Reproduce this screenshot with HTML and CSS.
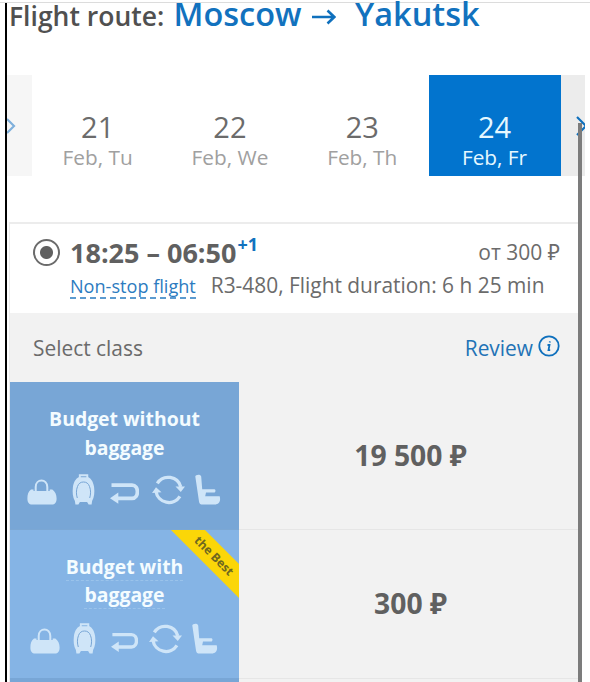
FILE: index.html
```html
<!DOCTYPE html>
<html lang="en">
<head>
    <meta charset="UTF-8">
    <meta name="viewport" content="width=device-width, initial-scale=1.0">
    <title>Flight route: Moscow - Yakutsk</title>
    <link rel="stylesheet" href="styles.css">
</head>
<body>
    <svg class="sprite" width="0" height="0">
        <symbol id="bag" viewBox="0 0 30 26">
            <path d="M8.700 12V8c0-8.600 11.600-8.600 11.600 0v4" fill="none" stroke="currentColor" stroke-width="2"/>
            <path d="M4 10.500h2.500V12h16.200v-1.500h2.600c2.800 1.700 4.300 5.500 4.300 9 0 4-1.800 6-4.600 6H5c-2.800 0-4.600-2-4.600-6 0-3.500.8-7.300 3.600-9z"/>
        </symbol>
        <symbol id="suitcase" viewBox="0 0 23 31">
            <path d="M7.800 5V1.300h7.500V5" fill="none" stroke="currentColor" stroke-width="1.900"/>
            <path d="M6.500 3.300h10c3 1.500 5 5.500 5.600 9.900.6 4.900.2 9.800-2 13.800l-.5 3.500h-3l-1.500-2.500H7.900l-1.500 2.500h-3L2.900 27C.7 23 .3 18.100.9 13.200c.6-4.400 2.600-8.400 5.600-9.900z"/>
            <path class="cut" d="M5.300 24c-1.200-3.700-1.200-8 .2-11.500C6.600 9.300 8.700 8 11.500 8s4.900 1.300 6 4.500c1.400 3.500 1.400 7.800.2 11.500"/>
        </symbol>
        <symbol id="refund" viewBox="0 0 29 22">
            <path d="M1.500 3.100H22c7.200 0 7.200 13.300 0 13.300H7" fill="none" stroke="currentColor" stroke-width="3.700"/>
            <path d="M8.300 10.400v11.400L0 16.200z"/>
        </symbol>
        <symbol id="exchange" viewBox="0 0 33 31">
            <path d="M5.300 9.300A13 13 0 0 1 28.800 13M27.900 22.300A13 13 0 0 1 4 17.500" fill="none" stroke="currentColor" stroke-width="3.300"/>
            <path d="M23.500 12.500H33L28.800 18zM0 19l4-5.700 5.500 5z"/>
        </symbol>
        <symbol id="seat" viewBox="0 0 26 31">
            <path d="M.3 2.500C.5.500 5.700-.2 6.200 2.500l1 12.700h12.300c1.300.2 1.300 3 0 3.300H11l-.8 3.700h14.500c1.300 5-.7 8.300-5 8.300H8c-2.700 0-3.600-.5-4-3z"/>
        </symbol>
    </svg>

    <div class="page">
        <h1 class="route">
            <span class="route-label">Flight route:</span>
            <span class="city from">Moscow</span>
            <svg class="route-arrow" width="24" height="16" viewBox="0 0 24 16"><path d="M0 8h22M15.500 1.500L22.300 8l-6.800 6.500"/></svg>
            <span class="city to">Yakutsk</span>
        </h1>

        <div class="dates">
            <div class="nav prev"><svg width="9" height="18" viewBox="0 0 9 18"><path d="M0 2l7 7-7 7"/></svg></div>
            <div class="date"><b>21</b><span>Feb, Tu</span></div>
            <div class="date"><b>22</b><span>Feb, We</span></div>
            <div class="date"><b>23</b><span>Feb, Th</span></div>
            <div class="date active"><b>24</b><span>Feb, Fr</span></div>
            <div class="nav next"><svg width="9" height="20" viewBox="0 0 9 20"><path d="M1 1l9 9-9 9"/></svg></div>
        </div>

        <div class="card">
            <div class="flight">
                <span class="radio"></span>
                <div class="info">
                    <div class="times">
                        <span class="time">18:25 – 06:50</span><sup>+1</sup>
                        <span class="from-price">от 300 ₽</span>
                    </div>
                    <div class="details">
                        <a class="nonstop">Non-stop flight</a>
                        <span class="duration">R3-480, Flight duration: 6 h 25 min</span>
                    </div>
                </div>
            </div>

            <div class="class-head">
                <span class="select">Select class</span>
                <a class="review">Review</a>
                <svg width="22" height="22" viewBox="0 0 22 22"><circle cx="11" cy="11" r="9.700"/><path d="M11.900 6.300l-.2 1.200M9.500 10h2l-1 5.200h1.700"/></svg>
            </div>

            <div class="fare">
                <div class="fare-name">
                    <div class="title"><span>Budget without</span><br><span>baggage</span></div>
                    <div class="icons">
                        <svg class="i-bag"><use href="#bag"/></svg>
                        <svg class="i-suitcase"><use href="#suitcase"/></svg>
                        <svg class="i-refund"><use href="#refund"/></svg>
                        <svg class="i-exchange"><use href="#exchange"/></svg>
                        <svg class="i-seat"><use href="#seat"/></svg>
                    </div>
                </div>
                <div class="price">19 500 ₽</div>
            </div>

            <div class="fare best">
                <div class="fare-name">
                    <div class="ribbon"><span>the Best</span></div>
                    <div class="title"><span>Budget with</span><br><span>baggage</span></div>
                    <div class="icons">
                        <svg class="i-bag"><use href="#bag"/></svg>
                        <svg class="i-suitcase"><use href="#suitcase"/></svg>
                        <svg class="i-refund"><use href="#refund"/></svg>
                        <svg class="i-exchange"><use href="#exchange"/></svg>
                        <svg class="i-seat"><use href="#seat"/></svg>
                    </div>
                </div>
                <div class="price">300 ₽</div>
            </div>

            <div class="fare last">
                <div class="fare-name"></div>
                <div class="price"></div>
            </div>
        </div>

        <div class="scrollbar"></div>
    </div>
</body>
</html>
```
FILE: styles.css
```css
* {
    box-sizing: border-box;
}
body {
    margin: 0;
    background: #fff;
    font-family: "Open Sans", "Noto Sans", sans-serif;
    color: #6b6b6b;
}
svg {
    flex: none;
    fill: none;
    stroke: #0f70bd;
}
.sprite {
    position: absolute;
}
.page {
    position: relative;
    height: 682px;
    padding-top: 2px;
    padding-left: 7px;
    background: linear-gradient(#000, #000) 5px 3px / 2px 100% no-repeat;
}
.page::before {
    content: "";
    display: block;
    height: 1px;
    margin-left: -7px;
    background: #dcdcdc;
}

/* heading */
.route {
    display: flex;
    align-items: baseline;
    height: 72px;
    margin: 0;
    padding-left: 2px;
    line-height: 22px;
    font-weight: 600;
}
.route-label {
    width: 164.5px;
    font-size: 26.5px;
    color: #505050;
}
.city {
    font-size: 32.5px;
    color: #1272be;
}
.city.from {
    width: 138.5px;
}
.route-arrow {
    width: 24px;
    margin-right: 19px;
    stroke-width: 2.6;
    align-self: flex-start;
    margin-top: 6px;
}

/* dates */
.dates {
    display: flex;
    height: 101px;
}
.nav {
    display: flex;
    align-items: center;
    background: #f6f6f6;
}
.nav svg {
    stroke-width: 2.2;
}
.prev {
    width: 25px;
}
.prev svg {
    stroke: #7fb0dc;
}
.next {
    width: 24px;
    background: #ececec;
    justify-content: flex-end;
}
.date {
    width: 132.3px;
    padding-top: 35px;
    padding-right: 1px;
    text-align: center;
}
.date b {
    display: block;
    font-size: 29px;
    font-weight: 400;
    line-height: 34px;
}
.date span {
    display: block;
    font-size: 20.8px;
    line-height: 26px;
    color: #a0a0a0;
}
.date.active,
.date.active span {
    background: #0274ce;
    color: #e6f8ff;
}

/* flight */
.card {
    width: 569px;
    height: 460px;
    margin: 46px 0 0 2px;
    border: 2px solid #ececec;
    border-width: 2px 0 0 1px;
    background: #f2f2f2;
}
.flight {
    display: flex;
    height: 89px;
    padding: 10px 18px 0 23px;
    background: #fff;
}
.radio {
    width: 27px;
    height: 27px;
    margin: 5px 10px 0 0;
    border: 2px solid #6b6b6b;
    border-radius: 50%;
    background: radial-gradient(circle, #606060 6px, #fff 7px);
}
.info {
    flex: 1;
}
.times {
    display: flex;
    height: 36px;
    line-height: 37px;
}
.time {
    font-size: 27px;
    font-weight: 700;
    color: #606060;
}
sup {
    margin-left: 1px;
    font-size: 18px;
    font-weight: 700;
    line-height: 20px;
    color: #1272be;
}
.from-price {
    margin-left: auto;
    font-size: 21px;
}
.details {
    display: flex;
    align-items: baseline;
    margin-top: 2px;
    line-height: 26px;
    white-space: nowrap;
}
.nonstop {
    margin-right: 15px;
    border-bottom: 2px dashed #5c9bd0;
    font-size: 18.1px;
    line-height: 22px;
    color: #2c7bbf;
}
.duration {
    font-size: 20.9px;
}

/* class selection */
.class-head {
    display: flex;
    height: 69px;
    padding: 22px 18px 0 23px;
    font-size: 20.9px;
    line-height: 27px;
}
.review {
    margin-left: auto;
    margin-right: 5px;
    color: #2273b6;
}
.class-head svg {
    stroke-width: 1.8;
}
.fare {
    display: flex;
    height: 147px;
}
.best {
    height: 149px;
}
.last {
    height: 4px;
}
.fare-name {
    position: relative;
    width: 229px;
    padding-top: 22px;
    background: #78a6d6;
    color: #cfe5f8;
    overflow: hidden;
}
.best .fare-name {
    padding-top: 23px;
    border-top: 1px solid #7ba7d4;
    background: #85b4e5;
}
.title {
    height: 58px;
    font-size: 19.4px;
    font-weight: 700;
    line-height: 29px;
    text-align: center;
    color: #f4fcff;
}
.best .title {
    line-height: 28px;
}
.best .title span {
    border-bottom: 1px dashed #9ac3eb;
}
.icons {
    display: flex;
    align-items: flex-end;
    height: 43px;
    padding-left: 17px;
}
.icons svg {
    fill: currentColor;
    stroke: none;
}
.i-bag {
    width: 30px;
    height: 26px;
    margin-right: 15px;
}
.i-suitcase {
    width: 23px;
    height: 31px;
    margin-right: 15px;
}
.i-refund {
    width: 29px;
    height: 22px;
    margin: 0 13px 1px 0;
}
.i-exchange {
    width: 33px;
    height: 31px;
    margin-right: 10px;
}
.i-seat {
    width: 26px;
    height: 31px;
}
.best .icons {
    padding-left: 20px;
}
.best .i-bag {
    margin-right: 13px;
}
.best .i-refund {
    width: 27px;
    margin-right: 11px;
}
.cut {
    fill: none;
    stroke: #78a6d6;
    stroke-width: 1;
}
.ribbon {
    position: absolute;
    top: 14px;
    right: -35px;
    width: 120px;
    height: 24px;
    background: #fbd608;
    transform: rotate(45deg);
    text-align: center;
    font-size: 12px;
    font-weight: 700;
    line-height: 24px;
    color: #6e6820;
}
.price {
    flex: 1;
    padding-top: 52px;
    padding-left: 4px;
    font-size: 28.3px;
    font-weight: 700;
    line-height: 42px;
    text-align: center;
    color: #606060;
}
.best .price,
.last .price {
    border-top: 1px solid #e6e6e6;
}
.last .fare-name,
.last .price {
    padding: 0;
}

.scrollbar {
    position: absolute;
    top: 123px;
    left: 578px;
    bottom: 0;
    width: 4px;
    background: #7c7c7c;
}
```
